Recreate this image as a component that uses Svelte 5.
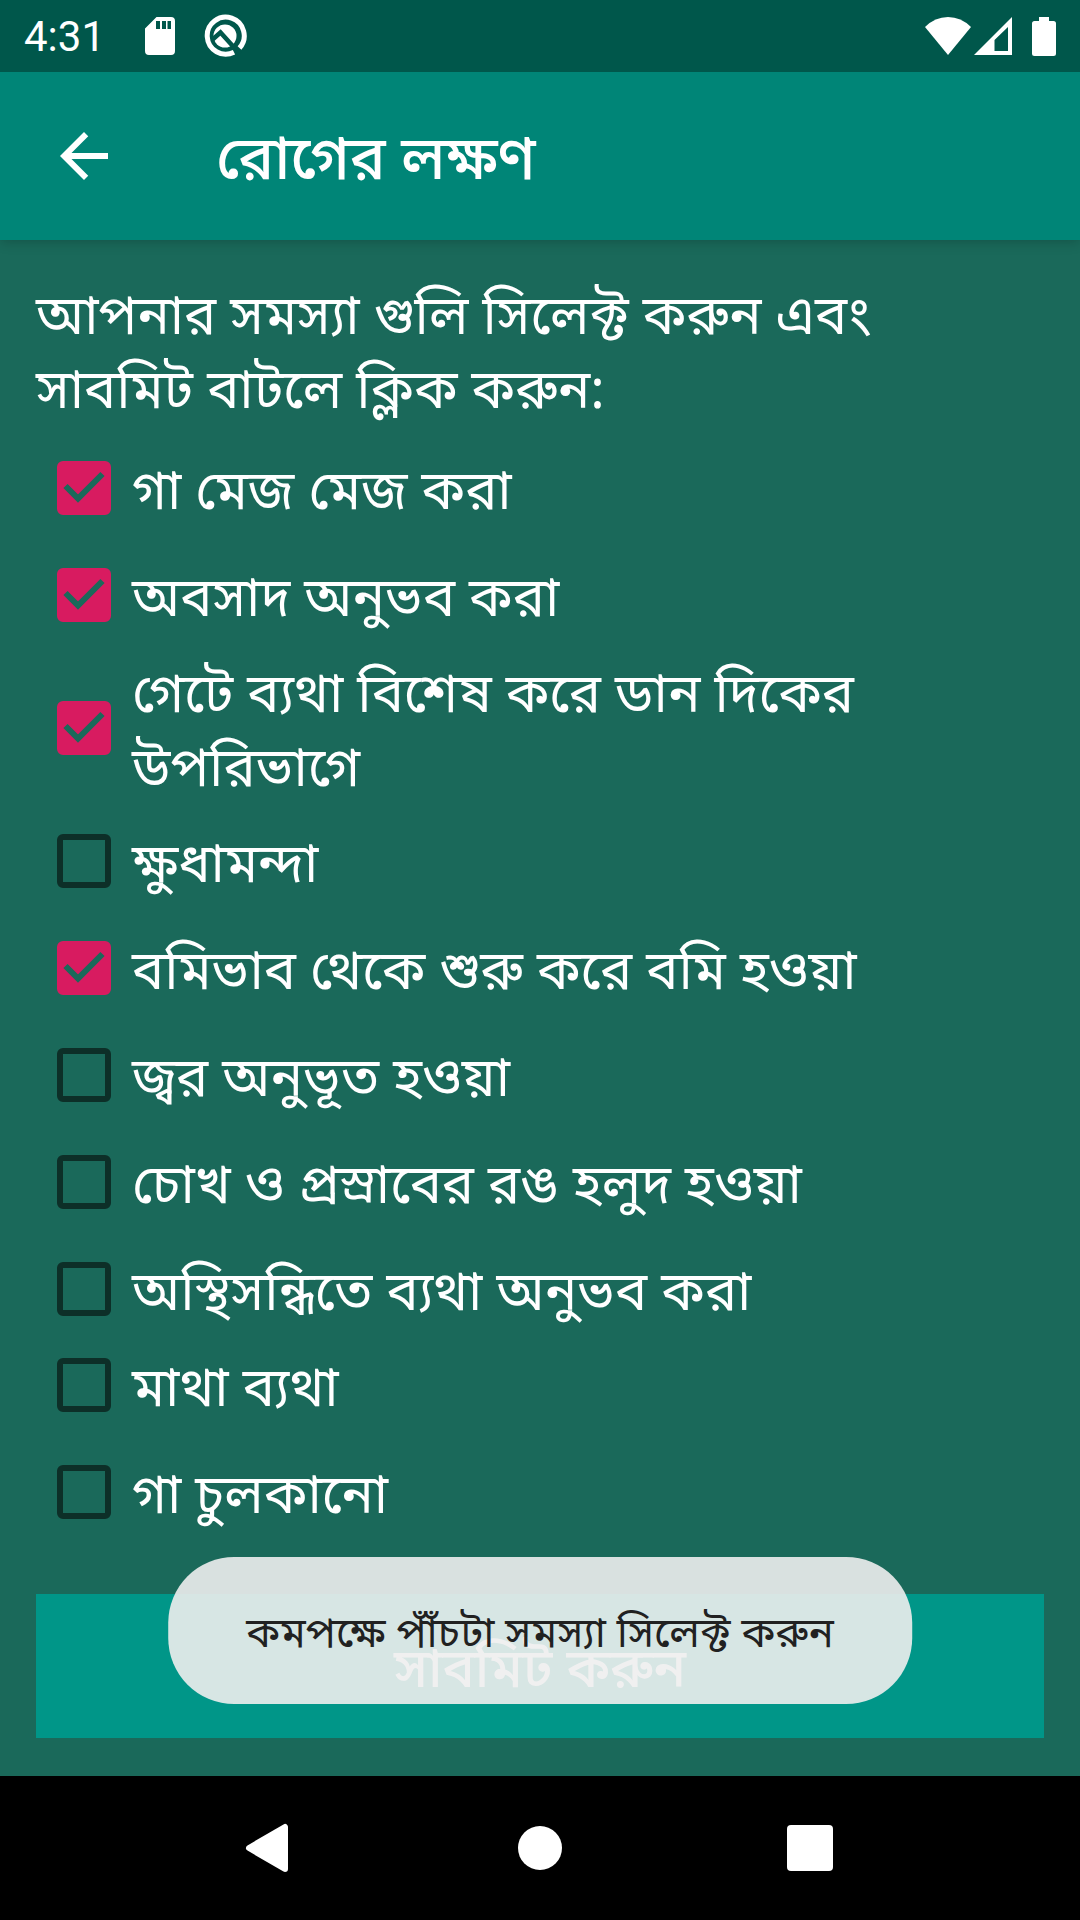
<script>
  let groups = $state([
    [
      { label: 'গা মেজ মেজ করা', checked: true },
      { label: 'অবসাদ অনুভব করা', checked: true },
      { label: 'গেটে ব্যথা বিশেষ করে ডান দিকের উপরিভাগে', checked: true },
      { label: 'ক্ষুধামন্দা', checked: false },
      { label: 'বমিভাব থেকে শুরু করে বমি হওয়া', checked: true },
      { label: 'জ্বর অনুভূত হওয়া', checked: false },
      { label: 'চোখ ও প্রস্রাবের রঙ হলুদ হওয়া', checked: false },
      { label: 'অস্থিসন্ধিতে ব্যথা অনুভব করা', checked: false }
    ],
    [
      { label: 'মাথা ব্যথা', checked: false },
      { label: 'গা চুলকানো', checked: false }
    ]
  ]);
</script>

<div class="screen">
  <header>
    <div class="status">
      <time>4:31</time>
      <svg class="sd" width="30" height="38" viewBox="0 0 30 38" aria-hidden="true">
        <path fill="#fff" fill-rule="evenodd" d="M11.500 0H26a4 4 0 0 1 4 4V34a4 4 0 0 1-4 4H4a4 4 0 0 1-4-4V11.500ZM11 4v8h4V4ZM17 4v8h4V4ZM22.500 4v8h3.500V4Z" />
      </svg>
      <svg class="q" width="44" height="44" viewBox="0 0 44 44" aria-hidden="true">
        <path d="M36.500 34A18.500 18.500 0 1 0 31 38.200" fill="none" stroke="#fff" stroke-width="5" />
        <circle cx="22" cy="22" r="11.500" fill="#fff" />
        <path d="M9 26L17.500 18.500L37 40" fill="none" stroke="#00574b" stroke-width="4.500" />
      </svg>
      <span class="spacer"></span>
      <svg class="wifi" width="46" height="38" viewBox="0 0 46 38" aria-hidden="true">
        <path fill="#fff" d="M23 38L0 10Q10 0 23 0T46 10Z" />
      </svg>
      <svg class="cell" width="38" height="38" viewBox="0 0 38 38" aria-hidden="true">
        <path fill="#fff" fill-rule="evenodd" d="M38 0V38H0ZM34 10L20.500 23V34H34Z" />
      </svg>
      <svg width="24" height="39" viewBox="0 0 24 39" aria-hidden="true">
        <path fill="#fff" d="M7 0H17V4H21.500A2.500 2.500 0 0 1 24 6.500V36.500A2.500 2.500 0 0 1 21.500 39H2.500A2.500 2.500 0 0 1 0 36.500V6.500A2.500 2.500 0 0 1 2.500 4H7Z" />
      </svg>
    </div>
    <div class="toolbar">
      <button class="icon" aria-label="ফিরে যান">
        <svg width="72" height="72" viewBox="0 0 24 24">
          <path fill="#fff" d="M20 11H7.830l5.590-5.590L12 4l-8 8 8 8 1.410-1.410L7.830 13H20z" />
        </svg>
      </button>
      <h1>রোগের লক্ষণ</h1>
    </div>
  </header>

  <main>
    <p class="prompt">আপনার সমস্যা গুলি সিলেক্ট করুন এবং সাবমিট বাটলে ক্লিক করুন:</p>
    {#each groups as group}
      <div class="group">
        {#each group as item}
          <label>
            <span class="box">
              <input type="checkbox" bind:checked={item.checked} />
              {#if item.checked}
                <svg width="54" height="54" viewBox="0 0 54 54" aria-hidden="true">
                  <path d="M8.500 25L21 37.500L45.500 13" fill="none" stroke="#1a695a" stroke-width="6" />
                </svg>
              {/if}
            </span>
            <span>{item.label}</span>
          </label>
        {/each}
      </div>
    {/each}
    <button class="submit">সাবমিট করুন</button>
    <div class="toast" role="status">কমপক্ষে পাঁঁচটা সমস্যা সিলেক্ট করুন</div>
  </main>

  <nav>
    <button class="icon" aria-label="Back">
      <svg width="72" height="72" viewBox="0 0 72 72">
        <path d="M15 36L51 15V57Z" fill="#fff" stroke="#fff" stroke-width="6" stroke-linejoin="round" />
      </svg>
    </button>
    <button class="icon" aria-label="Home">
      <svg width="72" height="72" viewBox="0 0 72 72"><circle cx="36" cy="36" r="22" fill="#fff" /></svg>
    </button>
    <button class="icon" aria-label="Overview">
      <svg width="72" height="72" viewBox="0 0 72 72"><rect x="13" y="13" width="46" height="46" rx="4" fill="#fff" /></svg>
    </button>
  </nav>
</div>

<style>
  :global(body) {
    margin: 0;
    background: #1a695a;
  }
  .screen {
    min-height: 100vh;
    display: flex;
    flex-direction: column;
    background: #1a695a;
    color: #fff;
    font-family: 'Noto Sans', 'Noto Sans Bengali', sans-serif;
    font-size: 54px;
    line-height: 74px;
  }
  svg {
    display: block;
    flex: none;
  }
  header {
    background: #008577;
    box-shadow: 0 2px 12px rgba(0, 0, 0, 0.2);
  }
  .status {
    display: flex;
    align-items: center;
    height: 72px;
    padding: 0 24px;
    background: #00574b;
  }
  time {
    font-family: Roboto, sans-serif;
    font-size: 42px;
    line-height: 50px;
    padding-top: 2px;
  }
  .sd {
    margin-left: 40px;
  }
  .q {
    margin-left: 28px;
  }
  .spacer {
    flex: 1;
  }
  .cell {
    margin: 0 20px 0 3px;
  }
  .toolbar {
    display: flex;
    align-items: center;
    gap: 96px;
    height: 168px;
    padding: 0 48px;
  }
  .icon {
    display: block;
    padding: 0;
    border: 0;
    background: none;
  }
  h1 {
    margin: 0;
    font-size: 60px;
    font-weight: 500;
    line-height: 80px;
  }
  main {
    position: relative;
    flex: 1;
    display: flex;
    flex-direction: column;
    padding: 36px;
  }
  .prompt {
    margin: 0 0 16px;
    padding-right: 21px;
  }
  .group {
    display: flex;
    flex-direction: column;
    gap: 11px;
  }
  label {
    display: flex;
    align-items: center;
    gap: 21px;
    min-height: 96px;
    padding: 0 21px;
  }
  .box {
    display: grid;
    flex: none;
  }
  .box > * {
    grid-area: 1 / 1;
    pointer-events: none;
  }
  input {
    appearance: none;
    box-sizing: border-box;
    width: 54px;
    height: 54px;
    margin: 0;
    border: 6px solid #0d2f28;
    border-radius: 6px;
  }
  input:checked {
    border-color: #d81b60;
    background: #d81b60;
  }
  .submit {
    height: 144px;
    margin-top: 54px;
    border: 0;
    background: #009688;
    color: #fff;
    font: inherit;
    font-weight: 500;
  }
  .toast {
    position: absolute;
    bottom: 72px;
    left: 50%;
    transform: translateX(-50%);
    box-sizing: border-box;
    padding: 45px 78px;
    border-radius: 66px;
    background: rgba(238, 238, 238, 0.9);
    color: #212121;
    font-size: 42px;
    line-height: 57px;
    white-space: nowrap;
  }
  nav {
    display: flex;
    justify-content: center;
    align-items: center;
    gap: 198px;
    height: 144px;
    background: #000;
  }
</style>
